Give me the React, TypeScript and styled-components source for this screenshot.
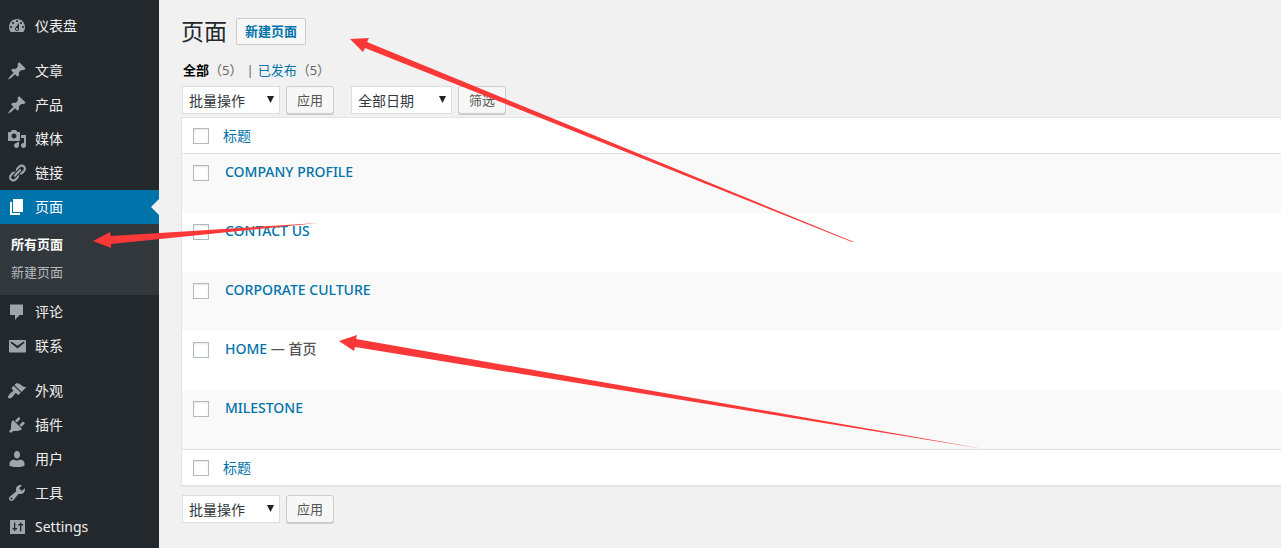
import React, { useState } from "react";
import styled, { createGlobalStyle, css } from "styled-components";

const GlobalStyle = createGlobalStyle`
  *, *::before, *::after { box-sizing: border-box; }
  html, body { margin: 0; padding: 0; }
  body {
    background: #f1f1f1;
    color: #444;
    font-family: "Noto Sans", "Noto Sans CJK SC", sans-serif;
    font-size: 13px;
    line-height: 18px;
  }
  a { color: #0073aa; text-decoration: none; }
  button, input, select { font-family: inherit; margin: 0; }
`;

/* ---------- Icons (20 x 20 grid) ---------- */

const icons = {
  dashboard:
    "M3.76 16h12.48c1.1-1.37 1.76-3.11 1.76-5 0-4.42-3.58-8-8-8s-8 3.58-8 8c0 1.89.66 3.63 1.76 5zM10 4c.55 0 1 .45 1 1s-.45 1-1 1-1-.45-1-1 .45-1 1-1zM6 6c.55 0 1 .45 1 1s-.45 1-1 1-1-.45-1-1 .45-1 1-1zm8 0c.55 0 1 .45 1 1s-.45 1-1 1-1-.45-1-1 .45-1 1-1zm-5.37 5.55L12 7v6c0 1.1-.9 2-2 2s-2-.9-2-2c0-.57.24-1.08.63-1.45zM4 10c.55 0 1 .45 1 1s-.45 1-1 1-1-.45-1-1 .45-1 1-1zm12 0c.55 0 1 .45 1 1s-.45 1-1 1-1-.45-1-1 .45-1 1-1zm-5 3c0-.55-.45-1-1-1s-1 .45-1 1 .45 1 1 1 1-.45 1-1z",
  pin: "M10.44 3.02l1.82-1.82 6.36 6.35-1.83 1.82c-1.05-.68-2.48-.57-3.41.36l-.75.75c-.92.93-1.04 2.35-.35 3.41l-1.83 1.82-2.41-2.41-2.8 2.79c-.42.42-3.38 2.71-3.8 2.29s1.86-3.39 2.28-3.81l2.79-2.79L4.1 9.36l1.83-1.82c1.05.69 2.48.57 3.4-.36l.75-.75c.93-.92 1.05-2.35.36-3.41z",
  media:
    "M13 11V4c0-.55-.45-1-1-1h-1.67L9 1H5L3.67 3H2c-.55 0-1 .45-1 1v7c0 .55.45 1 1 1h10c.55 0 1-.45 1-1zM7 4.5c1.38 0 2.5 1.12 2.5 2.5S8.38 9.5 7 9.5 4.5 8.38 4.5 7 5.62 4.5 7 4.5zM14 6h5v10.5c0 1.38-1.12 2.5-2.5 2.5S14 17.88 14 16.5s1.12-2.5 2.5-2.5c.17 0 .34.02.5.05V9h-3V6zm-4 8.05V13h2v3.5c0 1.38-1.12 2.5-2.5 2.5S7 17.88 7 16.5 8.12 14 9.5 14c.17 0 .34.02.5.05z",
  link: "M17.74 2.76c1.68 1.69 1.68 4.41 0 6.1l-1.53 1.52c-1.12 1.12-2.7 1.47-4.14 1.09l2.62-2.61.76-.77.76-.76c.84-.84.84-2.2 0-3.04-.84-.85-2.2-.85-3.04 0l-.77.76-3.38 3.38c-.37-1.44-.02-3.02 1.1-4.14l1.52-1.53c1.69-1.68 4.42-1.68 6.1 0zM8.59 13.43l5.34-5.34c.42-.42.42-1.1 0-1.52-.44-.43-1.13-.39-1.53 0l-5.33 5.34c-.42.42-.42 1.1 0 1.52.44.43 1.13.39 1.52 0zm-.76 2.29l4.14-4.15c.38 1.44.03 3.02-1.09 4.14l-1.52 1.53c-1.69 1.68-4.41 1.68-6.1 0-1.68-1.68-1.68-4.42 0-6.1l1.53-1.52c1.12-1.12 2.7-1.47 4.14-1.1l-4.14 4.15c-.85.84-.85 2.2 0 3.05.84.84 2.2.84 3.04 0z",
  page: "M6 15V2h10v13H6zm-1 1h8v2H3V5h2v11z",
  comment: "M3 2.5h13V13h-3.5L8 18v-5H3z",
  mail: "M3 4h15c.6 0 1 .4 1 1v10.5c0 .6-.4 1-1 1H3c-.6 0-1-.4-1-1V5c0-.6.4-1 1-1zm7.49 8.6l6.74-5.53c.24-.2.43-.66.13-1.07-.29-.41-.82-.42-1.17-.17l-5.7 3.86L4.8 5.83c-.35-.25-.88-.24-1.17.17-.3.41-.11.87.13 1.07z",
  brush:
    "M14.48 11.06L7.41 3.99l1.5-1.5c.5-.56 2.3-.47 3.51.32 1.21.8 1.43 1.28 2.91 2.1 1.18.64 2.45 1.26 4.45.85zm-.71.71L6.7 4.7 4.93 6.47c-.39.39-.39 1.02 0 1.41l1.06 1.06c.39.39.39 1.03 0 1.42-.6.6-1.43 1.11-2.21 1.69-.35.26-.7.53-1.01.84C1.43 14.23.4 16.08 1.4 17.07c.99 1 2.84-.03 4.18-1.36.31-.31.58-.66.85-1.02.57-.78 1.08-1.61 1.69-2.21.39-.39 1.02-.39 1.41 0l1.06 1.06c.39.39 1.02.39 1.41 0z",
  plug: "M13.11 4.36L9.87 7.6 8 5.73l3.24-3.24c.35-.34 1.05-.2 1.56.32.52.51.66 1.21.31 1.55zm-8 1.77l.91-1.12 9.01 9.01-1.19.84c-.71.71-2.63 1.16-3.82 1.16H6.14L4.9 17.26c-.59.59-1.54.59-2.12 0-.59-.58-.59-1.53 0-2.12l1.24-1.24v-3.88c0-1.13.4-3.19 1.09-3.89zm7.26 3.97l3.24-3.24c.34-.35 1.04-.21 1.55.31.52.51.66 1.21.31 1.55l-3.24 3.25z",
  user: "M10 9.5c-1.8 0-3-1.7-3-3.7S8 2 10 2s3 1.8 3 3.8-1.2 3.7-3 3.7zM7 10.5c1.8 1.3 4.2 1.3 6 0 2.6.4 4.5 1.8 4.5 4v2c0 .8-3.5 1.5-7.5 1.5s-7.5-.7-7.5-1.5v-2c0-2.2 1.9-3.6 4.5-4z",
  wrench:
    "M16.68 9.77c-1.34 1.34-3.3 1.67-4.95.99l-5.41 6.52c-.99.99-2.59.99-3.58 0s-.99-2.59 0-3.57l6.52-5.42c-.68-1.65-.35-3.61.99-4.95 1.28-1.28 3.12-1.62 4.72-1.06l-2.89 2.89 2.82 2.82 2.86-2.87c.53 1.58.18 3.39-1.08 4.65zM3.81 16.21c.4.39 1.04.39 1.43 0 .4-.4.4-1.04 0-1.43-.39-.4-1.03-.4-1.43 0-.39.39-.39 1.03 0 1.43z",
  sliders:
    "M3 3h15v14H3zM7 5.5V11H5.5v1.5H7V14h1.3v-1.5H10V11H8.3V5.5zM13 5.5V7h-1.7v1.5H13v6h1.3v-6H16V7h-1.7V5.5z",
};

type IconName = keyof typeof icons;

/* ---------- Layout ---------- */

const Shell = styled.div`
  position: relative;
  display: flex;
  min-height: 100vh;
  overflow: hidden;
`;

const Sidebar = styled.nav`
  flex: 0 0 159px;
  background: #23282d;
  padding-top: 9px;
`;

const MenuGroup = styled.ul`
  list-style: none;
  margin: 0 0 11px;
  padding: 0;
  &:last-child { margin-bottom: 0; }
`;

const MenuLink = styled.a<{ $current?: boolean }>`
  position: relative;
  display: flex;
  align-items: center;
  gap: 8px;
  height: 34px;
  padding-left: 7px;
  color: #eee;
  font-size: 14px;
  svg { width: 20px; height: 20px; fill: #a0a5aa; }

  ${(p) =>
    p.$current &&
    css`
      background: #0073aa;
      color: #fff;
      svg { fill: #fff; }
      &::after {
        content: "";
        position: absolute;
        right: 0;
        top: 9px;
        border: 8px solid transparent;
        border-left: 0;
        border-right-color: #f1f1f1;
      }
    `}
`;

const Submenu = styled.ul`
  list-style: none;
  margin: 0;
  padding: 6px 0 9px;
  background: #32373c;
`;

const SubmenuLink = styled.a<{ $current?: boolean }>`
  display: block;
  padding: 5px 11px;
  color: ${(p) => (p.$current ? "#fff" : "#b4b9be")};
  font-weight: ${(p) => (p.$current ? 600 : 400)};
`;

const Main = styled.main`
  flex: 1;
  min-width: 0;
  padding: 18px 0 0 22px;
`;

const TitleBar = styled.header`
  display: flex;
  align-items: flex-start;
  gap: 9px;
`;

const Title = styled.h1`
  margin: 0;
  color: #23282d;
  font-size: 23px;
  font-weight: 400;
  line-height: 26px;
`;

const AddLink = styled.a`
  padding: 4px 8px;
  border: 1px solid #ccc;
  border-radius: 2px;
  background: #f7f7f7;
  font-weight: 600;
  line-height: 17px;
`;

const Filters = styled.ul`
  display: flex;
  list-style: none;
  margin: 16px 0 7px;
  padding: 0 0 0 2px;
  color: #666;
`;

const FilterItem = styled.li`
  & + &::before { content: "|"; margin: 0 4px; }
`;

const FilterLink = styled.a<{ $current?: boolean }>`
  ${(p) => p.$current && css`color: #000; font-weight: 600;`}
`;

const Toolbar = styled.div`
  display: flex;
  gap: 17px;
  padding-left: 1px;
`;

const ActionGroup = styled.form`
  display: flex;
  gap: 6px;
`;

const SelectBox = styled.label<{ $wide?: boolean }>`
  position: relative;
  display: block;
  width: ${(p) => (p.$wide ? 101 : 98)}px;
  svg {
    position: absolute;
    right: 6px;
    top: 10px;
    width: 7px;
    height: 7px;
    fill: #222;
    pointer-events: none;
  }
`;

const Select = styled.select`
  appearance: none;
  display: block;
  width: 100%;
  height: 28px;
  padding: 0 6px;
  border: 1px solid #ddd;
  border-radius: 0;
  background: #fff;
  color: #32373c;
  font-size: 14px;
`;

const Button = styled.button`
  height: 28px;
  padding: 0 10px 2px;
  border: 1px solid #ccc;
  border-radius: 3px;
  background: #f7f7f7;
  box-shadow: 0 1px 0 #ccc;
  color: #555;
  font-size: 13px;
`;

const Table = styled.table`
  width: 100%;
  margin: 3px 0 9px;
  border: 1px solid #e5e5e5;
  border-right: 0;
  border-spacing: 0;
  background: #fff;
  box-shadow: 0 1px 1px rgba(0, 0, 0, 0.04);
`;

const HeadCell = styled.th<{ $edge: "top" | "bottom" }>`
  height: 36px;
  padding: 0 8px;
  text-align: left;
  font-size: 14px;
  font-weight: 400;
  border-${(p) => (p.$edge === "top" ? "bottom" : "top")}: 1px solid #e1e1e1;
`;

const CheckCell = styled.td`
  width: 33px;
  padding: 11px 0 0 11px;
  vertical-align: top;
`;

const CheckHead = styled(HeadCell)`
  width: 33px;
  padding: 0 0 0 11px;
`;

const Row = styled.tr`
  height: 59px;
  &:nth-child(odd) { background: #f9f9f9; }
`;

const TitleCell = styled.td`
  padding: 8px 10px;
  vertical-align: top;
  color: #555;
  font-size: 14px;
  font-weight: 500;
  line-height: 20px;
`;

const Checkbox = styled.input`
  appearance: none;
  display: block;
  width: 16px;
  height: 16px;
  border: 1px solid #b4b9be;
  background: #fff;
  box-shadow: inset 0 1px 2px rgba(0, 0, 0, 0.1);
  &:checked { background: #0073aa; }
`;

const Annotations = styled.svg`
  position: absolute;
  left: 0;
  top: 0;
  width: 1281px;
  height: 548px;
  fill: #fb3838;
  pointer-events: none;
`;

/* ---------- Data ---------- */

type MenuEntry = { icon: IconName; label: string; children?: string[] };

const menu: MenuEntry[][] = [
  [{ icon: "dashboard", label: "仪表盘" }],
  [
    { icon: "pin", label: "文章" },
    { icon: "pin", label: "产品" },
    { icon: "media", label: "媒体" },
    { icon: "link", label: "链接" },
    { icon: "page", label: "页面", children: ["所有页面", "新建页面"] },
    { icon: "comment", label: "评论" },
    { icon: "mail", label: "联系" },
  ],
  [
    { icon: "brush", label: "外观" },
    { icon: "plug", label: "插件" },
    { icon: "user", label: "用户" },
    { icon: "wrench", label: "工具" },
    { icon: "sliders", label: "Settings" },
  ],
];

const pages: { title: string; state?: string }[] = [
  { title: "COMPANY PROFILE" },
  { title: "CONTACT US" },
  { title: "CORPORATE CULTURE" },
  { title: "HOME", state: "首页" },
  { title: "MILESTONE" },
];

/* ---------- Parts ---------- */

function Icon({ name }: { name: IconName }) {
  return (
    <svg viewBox="0 0 20 20" aria-hidden="true">
      <path fillRule="evenodd" d={icons[name]} />
    </svg>
  );
}

function Action({ label, option, button, wide }: { label: string; option: string; button: string; wide?: boolean }) {
  return (
    <ActionGroup onSubmit={(e) => e.preventDefault()}>
      <SelectBox $wide={wide}>
        <Select aria-label={label}>
          <option>{option}</option>
        </Select>
        <svg viewBox="0 0 7 7" aria-hidden="true">
          <path d="M0 0h7L3.5 7z" />
        </svg>
      </SelectBox>
      <Button type="submit">{button}</Button>
    </ActionGroup>
  );
}

export default function App() {
  const [selected, setSelected] = useState<string[]>([]);
  const all = selected.length === pages.length;
  const toggleAll = () => setSelected(all ? [] : pages.map((p) => p.title));
  const toggle = (title: string) =>
    setSelected((s) => (s.includes(title) ? s.filter((t) => t !== title) : [...s, title]));

  const headRow = (edge: "top" | "bottom") => (
    <tr>
      <CheckHead $edge={edge}>
        <Checkbox type="checkbox" aria-label="全选" checked={all} onChange={toggleAll} />
      </CheckHead>
      <HeadCell $edge={edge} scope="col">
        <a href="#title">标题</a>
      </HeadCell>
    </tr>
  );

  return (
    <>
      <GlobalStyle />
      <Shell>
        <Sidebar>
          {menu.map((group, i) => (
            <MenuGroup key={i}>
              {group.map((item) => (
                <li key={item.label}>
                  <MenuLink href="#menu" $current={!!item.children}>
                    <Icon name={item.icon} />
                    {item.label}
                  </MenuLink>
                  {item.children && (
                    <Submenu>
                      {item.children.map((child, n) => (
                        <li key={child}>
                          <SubmenuLink href="#submenu" $current={n === 0}>
                            {child}
                          </SubmenuLink>
                        </li>
                      ))}
                    </Submenu>
                  )}
                </li>
              ))}
            </MenuGroup>
          ))}
        </Sidebar>

        <Main>
          <TitleBar>
            <Title>页面</Title>
            <AddLink href="#new">新建页面</AddLink>
          </TitleBar>

          <Filters>
            <FilterItem>
              <FilterLink href="#all" $current>全部</FilterLink>（5）
            </FilterItem>
            <FilterItem>
              <FilterLink href="#published">已发布</FilterLink>（5）
            </FilterItem>
          </Filters>

          <Toolbar>
            <Action label="选择批量操作" option="批量操作" button="应用" />
            <Action label="按日期筛选" option="全部日期" button="筛选" wide />
          </Toolbar>

          <Table>
            <thead>{headRow("top")}</thead>
            <tbody>
              {pages.map((page) => (
                <Row key={page.title}>
                  <CheckCell>
                    <Checkbox
                      type="checkbox"
                      aria-label={page.title}
                      checked={selected.includes(page.title)}
                      onChange={() => toggle(page.title)}
                    />
                  </CheckCell>
                  <TitleCell>
                    <a href="#edit">{page.title}</a>
                    {page.state && ` — ${page.state}`}
                  </TitleCell>
                </Row>
              ))}
            </tbody>
            <tfoot>{headRow("bottom")}</tfoot>
          </Table>

          <Toolbar>
            <Action label="选择批量操作" option="批量操作" button="应用" />
          </Toolbar>
        </Main>

        <Annotations viewBox="0 0 1281 548" aria-hidden="true">
          <path d="M350 39L369 38L367 42L854 242L852 242L365 48L363 52Z" />
          <path d="M93 241L110 232L111 236L318 223L111 244L111 248Z" />
          <path d="M339 341L357 335L356 339L984 449L355 347L354 351Z" />
        </Annotations>
      </Shell>
    </>
  );
}
